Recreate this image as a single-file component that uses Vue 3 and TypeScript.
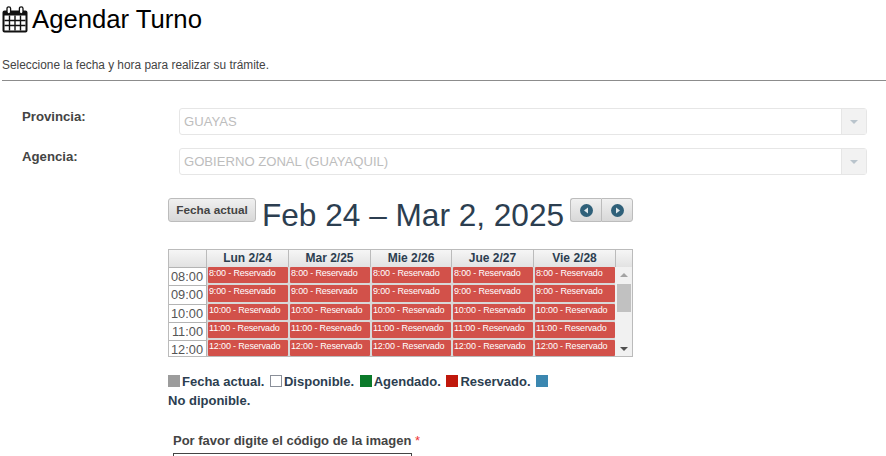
<script setup lang="ts">
const days: string[] = ['Lun 2/24', 'Mar 2/25', 'Mie 2/26', 'Jue 2/27', 'Vie 2/28']
const hours: number[] = [8, 9, 10, 11, 12]
const pad = (h: number): string => String(h).padStart(2, '0') + ':00'
</script>

<template>
  <div class="page">
    <h1 class="title">
      <svg class="cal-icon" width="26" height="27" viewBox="0 0 26 27">
        <path d="M2.5 4.5h21a2 2 0 0 1 2 2v18a2 2 0 0 1-2 2h-21a2 2 0 0 1-2-2v-18a2 2 0 0 1 2-2z" fill="#111" />
        <path d="M2.5 9.5h21v15h-21z" fill="#fff" />
        <path d="M7.5 9.5v15M13 9.5v15M18.5 9.5v15M2.5 14.5h21M2.5 19.5h21" stroke="#111" stroke-width="1.4" fill="none" />
        <rect x="5" y="0.8" width="3.6" height="7" rx="1.8" fill="#fff" stroke="#111" stroke-width="1.3" />
        <rect x="17.4" y="0.8" width="3.6" height="7" rx="1.8" fill="#fff" stroke="#111" stroke-width="1.3" />
      </svg>
      <span>Agendar Turno</span>
    </h1>
    <p class="lead">Seleccione la fecha y hora para realizar su trámite.</p>
    <hr class="rule" />

    <div class="form-row first">
      <label class="form-label">Provincia:</label>
      <div class="select">
        <span class="select-value">GUAYAS</span>
        <span class="select-arrow"><i></i></span>
      </div>
    </div>
    <div class="form-row">
      <label class="form-label">Agencia:</label>
      <div class="select">
        <span class="select-value">GOBIERNO ZONAL (GUAYAQUIL)</span>
        <span class="select-arrow"><i></i></span>
      </div>
    </div>

    <div class="content">
      <div class="toolbar">
        <button class="btn today">Fecha actual</button>
        <h2 class="range">Feb 24 – Mar 2, 2025</h2>
        <div class="btn-group">
          <button class="btn nav">
            <svg width="13" height="13" viewBox="0 0 13 13"><circle cx="6.5" cy="6.5" r="6.5" fill="#2f6079" /><path d="M8 3.5v6L4 6.5z" fill="#dfe8ec" /></svg>
          </button>
          <button class="btn nav">
            <svg width="13" height="13" viewBox="0 0 13 13"><circle cx="6.5" cy="6.5" r="6.5" fill="#2f6079" /><path d="M5 3.5v6l4-3z" fill="#dfe8ec" /></svg>
          </button>
        </div>
      </div>

      <div class="calendar">
        <div class="cal-head">
          <div class="head-cell corner"></div>
          <div v-for="d in days" :key="d" class="head-cell">{{ d }}</div>
          <div class="head-cell end"></div>
        </div>
        <div class="cal-body">
          <div class="rows">
            <div v-for="h in hours" :key="h" class="row">
              <div class="time">{{ pad(h) }}</div>
              <div v-for="d in days" :key="d" class="slot">
                <div class="event">{{ h }}:00 - Reservado</div>
              </div>
            </div>
          </div>
          <div class="scrollbar">
            <span class="arrow up"></span>
            <span class="thumb"></span>
            <span class="arrow down"></span>
          </div>
        </div>
      </div>

      <div class="legend">
        <span class="swatch gray"></span>Fecha actual.
        <span class="swatch empty"></span>Disponible.
        <span class="swatch green"></span>Agendado.
        <span class="swatch red"></span>Reservado.
        <span class="swatch blue"></span><br />No diponible.
      </div>

      <div class="captcha">
        <label class="captcha-label">Por favor digite el código de la imagen <em>*</em></label>
        <div class="captcha-input"></div>
      </div>
    </div>
  </div>
</template>

<style>
html, body { margin: 0; background: #fff; overflow: hidden; }
</style>

<style scoped>
.page {
  width: 886px;
  height: 456px;
  overflow: hidden;
  font-family: "Liberation Sans", Arial, sans-serif;
  box-sizing: border-box;
  padding-top: 6px;
}
.title {
  margin: 0 0 0 2px;
  display: flex;
  align-items: center;
  gap: 4px;
  height: 27px;
  font-size: 25.7px;
  font-weight: 400;
  color: #000;
}
.lead {
  margin: 25px 0 0 2px;
  font-size: 11.87px;
  line-height: 14px;
  color: #444;
}
.rule {
  margin: 8px 0 0 2px;
  border: 0;
  height: 1px;
  background: #8c8c8c;
}
.form-row {
  display: flex;
  margin-top: 13px;
  padding-left: 22px;
}
.form-row.first { margin-top: 27px; }
.form-label {
  width: 157px;
  padding-top: 1px;
  font-size: 13.2px;
  font-weight: 700;
  line-height: 16px;
  color: #444;
}
.select {
  width: 688px;
  height: 27px;
  box-sizing: border-box;
  border: 1px solid #e6e6e6;
  border-radius: 3px;
  display: flex;
  background: #fff;
}
.select-value {
  flex: 1;
  padding-left: 4px;
  font-size: 13.1px;
  line-height: 25px;
  color: #bdbdbd;
}
.select-arrow {
  width: 24px;
  background: #f2f2f2;
  border-left: 1px solid #e6e6e6;
  display: flex;
  align-items: center;
  justify-content: center;
}
.select-arrow i {
  width: 0;
  height: 0;
  border-left: 4px solid transparent;
  border-right: 4px solid transparent;
  border-top: 4px solid #b9c4cc;
}
.content {
  margin: 23px 0 0 168px;
  width: 465px;
}
.toolbar {
  display: flex;
  align-items: flex-start;
  height: 40px;
}
.btn {
  height: 24px;
  box-sizing: border-box;
  border: 1px solid #bcbcbc;
  border-radius: 3px;
  background: linear-gradient(#f0f0f0, #d8d8d8);
  font-family: inherit;
  padding: 0;
  flex: none;
}
.today {
  width: 88px;
  font-size: 11.8px;
  font-weight: 700;
  color: #444;
}
.range {
  margin: -1px 0 0 6px;
  font-size: 31.6px;
  font-weight: 400;
  line-height: 37px;
  color: #2c3e50;
  white-space: nowrap;
  flex: none;
}
.btn-group {
  display: flex;
  margin-left: auto;
  flex: none;
}
.nav {
  width: 32px;
  display: flex;
  align-items: center;
  justify-content: center;
}
.nav:first-child { border-radius: 3px 0 0 3px; border-right: 0; width: 31px; }
.nav:last-child { border-radius: 0 3px 3px 0; }
.calendar {
  margin-top: 11px;
  width: 465px;
  height: 108px;
  box-sizing: border-box;
  border: 1px solid #bbb;
  overflow: hidden;
}
.cal-head {
  display: grid;
  grid-template-columns: 38px 82px 82px 81px 82px 82px 1fr;
  height: 17px;
}
.head-cell {
  background: linear-gradient(#f6f6f6, #e2e2e2);
  border-right: 1px solid #bbb;
  font-size: 12px;
  font-weight: 700;
  line-height: 17px;
  text-align: center;
  color: #2c3e50;
}
.head-cell.end { border-right: 0; }
.cal-body {
  display: flex;
  height: 90px;
  overflow: hidden;
}
.rows { flex: 1; min-width: 0; }
.row {
  display: grid;
  grid-template-columns: 38px 82px 82px 81px 82px 82px;
  grid-template-rows: minmax(0, 1fr);
  height: 18px;
}
.row:nth-child(2) { height: 19px; }
.time {
  box-sizing: border-box;
  min-height: 0;
  border-top: 1px solid #b4b4b4;
  border-right: 1px solid #b4b4b4;
  font-size: 12.8px;
  line-height: 18px;
  text-align: right;
  padding-right: 3px;
  color: #555;
  background: #fff;
}
.slot {
  box-sizing: border-box;
  min-height: 0;
  padding: 0 1px 2px 1px;
  background: #d8d8d8;
}
.event {
  height: 100%;
  border-radius: 1px;
  background: #d2514a;
  color: #fff;
  font-size: 9px;
  letter-spacing: -0.16px;
  line-height: 12px;
  padding-left: 1px;
  white-space: nowrap;
  overflow: hidden;
}
.scrollbar {
  width: 17px;
  flex: none;
  background: #f1f1f1;
  position: relative;
  display: flex;
  flex-direction: column;
  align-items: center;
}
.thumb {
  display: block;
  width: 14px;
  height: 28px;
  margin-top: 7px;
  background: #c1c1c1;
}
.arrow {
  width: 0;
  height: 0;
  border-left: 4px solid transparent;
  border-right: 4px solid transparent;
}
.arrow.up { margin-top: 6px; border-bottom: 4px solid #a3a3a3; }
.arrow.down { margin-top: auto; margin-bottom: 6px; border-top: 4px solid #505050; }
.legend {
  margin-top: 15px;
  font-size: 13px;
  font-weight: 700;
  line-height: 19px;
  color: #2c3e50;
  white-space: nowrap;
}
.swatch {
  display: inline-block;
  width: 12px;
  height: 12px;
  margin: 0 2px 0 2px;
  vertical-align: -1px;
  box-sizing: border-box;
}
.swatch:first-child { margin-left: 0; }
.gray { background: #9c9c9c; }
.empty { background: #fff; border: 1px solid #8a8f99; }
.green { background: #0b7a2a; }
.red { background: #c0180c; }
.blue { background: #3b87b0; }
.captcha { margin: 23px 0 0 5px; }
.captcha-label {
  display: block;
  font-size: 13px;
  font-weight: 700;
  line-height: 16px;
  color: #444;
}
.captcha-label em { color: #e33; font-style: normal; font-weight: 400; }
.captcha-input {
  margin-top: 4px;
  width: 239px;
  height: 30px;
  box-sizing: border-box;
  border: 1px solid #444;
}
</style>
